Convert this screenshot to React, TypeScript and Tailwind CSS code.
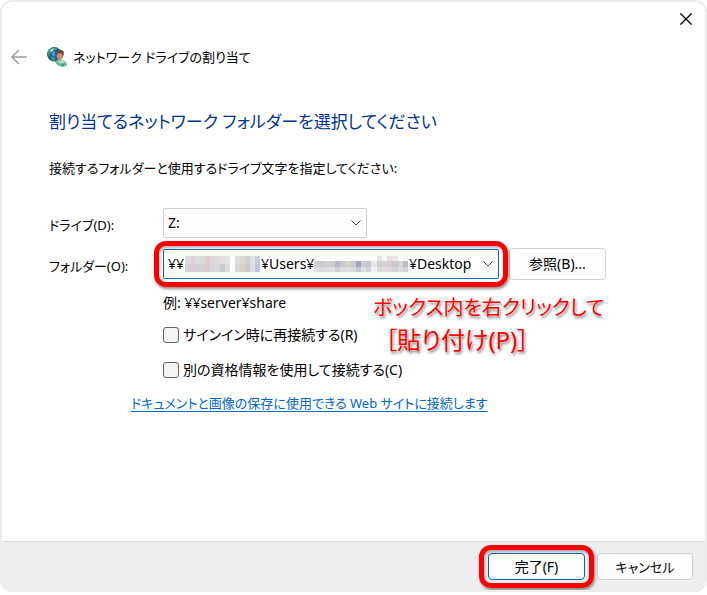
import React, { useState } from 'react';

// Small globe with a user in front, used as the wizard's icon
const NetworkDriveIcon: React.FC<React.SVGProps<SVGSVGElement>> = (props) => (
  <svg xmlns="http://www.w3.org/2000/svg" viewBox="0 0 20 20" fill="none" {...props}>
    <circle cx="7.300" cy="7.300" r="7.200" fill="#1a5aa8" />
    <path d="M.6 5.500C1.500 2.500 4.500.3 8 .3l3 .8-2 2L6.500 3 5 5.500 3.500 6 2.500 9 .5 8.500z" fill="#3c9a62" />
    <path d="M2.500 4C3.500 2 5.500 1.200 7.500 1.500L6 3.500 4.500 5z" fill="#9fe0e6" />
    <path d="M5 5l3-1.500V9L5 8.500z" fill="#35a5e8" />
    <path d="M4 9.500l3 .5 1.500 2.500-2 1.500-2-2z" fill="#3fa65a" />
    <path d="M7.800 14.500l3.200-2 4.500.8c3 .8 4.500 2.500 4.500 5-2 1.500-4.500 1.800-6.500 1.300-2.500-1-4.500-2.600-5.700-5.100z" fill="#6fb596" />
    <path d="M10.500 13.500l2.500 3 3 .5 1.500-1.500-2-2z" fill="#b9dfcc" />
    <path d="M14 17l2-1 1 2.500-1.500.8z" fill="#3f8f72" />
    <path d="M9.500 5.500c1-1.500 5-1.500 6 0 .8 2.500.5 5-.6 6.800l-2 1.700c-2-.5-3.500-3-3.400-8.500z" fill="#c98f6d" />
    <path d="M8.700 7.500C8 4.500 9.800 2.800 12.500 2.800c3 0 5 1.500 4.300 4.700l-1.200 3-.6-4-4-.3-1.300 2.300z" fill="#6a4a3a" />
  </svg>
);

const BackIcon: React.FC<React.SVGProps<SVGSVGElement>> = (props) => (
  <svg xmlns="http://www.w3.org/2000/svg" viewBox="0 0 16 16" fill="none" stroke="currentColor" strokeWidth={1.4} {...props}>
    <path strokeLinecap="round" strokeLinejoin="round" d="M15.300 8H.8M7.500 1.500L.8 8l6.700 6.500" />
  </svg>
);

const CloseIcon: React.FC<React.SVGProps<SVGSVGElement>> = (props) => (
  <svg xmlns="http://www.w3.org/2000/svg" viewBox="0 0 12 12" fill="none" stroke="currentColor" strokeWidth={1.3} {...props}>
    <path d="M.4.4l11.200 11.200M11.600.4L.4 11.600" />
  </svg>
);

const ChevronIcon: React.FC<React.SVGProps<SVGSVGElement>> = (props) => (
  <svg xmlns="http://www.w3.org/2000/svg" viewBox="0 0 10 6" fill="none" stroke="currentColor" strokeWidth={1} {...props}>
    <path d="M.5.5L5 5 9.500.5" />
  </svg>
);

// Red frame drawn around the control that the reader should use
const Highlight: React.FC = () => (
  <span className="pointer-events-none absolute -inset-x-[9px] -inset-y-2 rounded-xl border-5 border-[#fa0000] shadow-[1px_2px_3px_rgba(0,0,0,0.45),inset_1px_2px_3px_rgba(0,0,0,0.3)]" />
);

const HOST_TILES = [
  ['#dcdcdf', '#d8d6da', '#dddbe0', '#dcd8da', '#e2cdcf', '#d9d9dc', '#dcdce0', '#e0e0e0', '#e3e3e3', '#ffffff', '#dedee0', '#dfd6cd', '#cfd0d4', '#e2e2e4', '#c6cedd'],
  ['#d4d2d8', '#d5cdd3', '#cfcdd6', '#d8ced3', '#dcc9cc', '#d6d6de', '#d8d8dc', '#c5c8cd', '#dcdcdc', '#ffffff', '#d6d6d9', '#ddcdc0', '#c8cacf', '#dcdee2', '#bcc6da'],
];
const USER_TILES = [
  ['#f8f8f8', '#ffffff', '#ffffff', '#ffffff', '#ffffff', '#ffffff', '#ffffff', '#ffffff', '#ffffff', '#ffffff', '#ffffff', '#ffffff', '#e2e2e2', '#f5f5f5', '#eddcdf', '#e8e8e8', '#ffffff', '#f4f4f4'],
  ['#cfcfd1', '#cacace', '#d0d0d0', '#cdcdd0', '#b9bccb', '#c9c9d0', '#d3d2c4', '#c8cad0', '#9fa4c0', '#cbccd2', '#c4c7d3', '#e6e6e6', '#cfcfcf', '#d6d2d4', '#dfcbd0', '#c8cacf', '#d4d6db', '#b5c0c9'],
  ['#dedee0', '#dadada', '#dcdce2', '#e0dfdb', '#cdd0da', '#dadada', '#dedfe6', '#dbdbdb', '#c3c8da', '#dcdcdc', '#cdd1de', '#efefef', '#d9d9d9', '#dedede', '#dcd8de', '#d4d4d8', '#dcdce2', '#cfd3d8'],
];

// Mosaic hiding a private part of the path
const Mosaic: React.FC<{ rows: string[][]; className: string }> = ({ rows, className }) => (
  <span className={`pointer-events-none absolute flex h-4 flex-col ${className}`}>
    {rows.map((tiles, y) => (
      <span key={y} className="flex flex-1">
        {tiles.map((color, x) => (
          <span key={x} className="flex-1" style={{ backgroundColor: color }} />
        ))}
      </span>
    ))}
  </span>
);

export default function App() {
  const [drive, setDrive] = useState('Z:');
  const [folder, setFolder] = useState(
    '¥¥' + '\u2003'.repeat(5) + '\u2002¥Users¥' + '\u2003'.repeat(6) + '\u2002\u00a0¥Desktop',
  );
  const [reconnect, setReconnect] = useState(false);
  const [otherCredentials, setOtherCredentials] = useState(false);

  return (
    <div className="min-h-screen bg-white text-[14px] leading-5 text-black font-['Noto_Sans','Noto_Sans_CJK_JP',sans-serif] [font-feature-settings:'palt']">
      <main className="flex min-h-[592px] flex-col overflow-hidden rounded-xl border-2 border-[#ececec] bg-white">
        <div className="flex justify-end pt-2.5 pr-3">
          <button type="button" aria-label="閉じる" className="p-px">
            <CloseIcon className="h-3 w-3" />
          </button>
        </div>

        <header className="mt-[21px] flex items-center pl-[9px]">
          <button type="button" aria-label="戻る" className="text-[#9b9b9b]">
            <BackIcon className="h-4 w-4" />
          </button>
          <NetworkDriveIcon className="ml-5 h-5 w-5" />
          <span className="ml-1.5 text-[13px]">ネットワーク ドライブの割り当て</span>
        </header>

        <form className="flex flex-1 flex-col" onSubmit={(e) => e.preventDefault()}>
          <section className="flex-1 pl-[47px]">
            <h1 className="mt-[41px] text-[17px] leading-7 text-[#003399]">割り当てるネットワーク フォルダーを選択してください</h1>
            <p className="mt-[22px] text-[13px]">接続するフォルダーと使用するドライブ文字を指定してください:</p>

            <div className="mt-[30px] grid grid-cols-[114px_auto] items-center gap-y-2.5">
              <label htmlFor="drive" className="pt-1 text-[13px]">ドライブ(D):</label>
              <div className="relative w-[204px]">
                <select
                  id="drive"
                  value={drive}
                  onChange={(e) => setDrive(e.target.value)}
                  className="block h-[30px] w-full appearance-none rounded-xs border border-[#cfcfcf] bg-[#fdfdfd] px-1"
                >
                  <option>Z:</option>
                  <option>Y:</option>
                </select>
                <ChevronIcon className="pointer-events-none absolute top-3 right-1.5 h-1.5 w-2.5 text-[#444]" />
              </div>

              <label htmlFor="folder" className="pt-1 text-[13px]">フォルダー(O):</label>
              <div className="flex items-center gap-2.5">
                <div className="relative w-[336px]">
                  <input
                    id="folder"
                    value={folder}
                    onChange={(e) => setFolder(e.target.value)}
                    className="block h-[30px] w-full rounded-xs border border-[#0067c0] bg-white pr-5 pb-0.5 pl-1 outline-none"
                  />
                  <Mosaic rows={HOST_TILES} className="top-[7px] left-[22px] w-[75px]" />
                  <Mosaic rows={USER_TILES} className="top-[7px] left-[151px] w-[94px]" />
                  <ChevronIcon className="pointer-events-none absolute top-3 right-1.5 h-1.5 w-2.5 text-[#444]" />
                  <Highlight />
                </div>
                <button type="button" className="h-8 w-[97px] rounded-sm border border-[#d0d0d0] bg-[#fdfdfd]">
                  参照(B)...
                </button>
              </div>
            </div>

            <div className="relative pt-[13px] pl-[114px]">
              <p>例: ¥¥server¥share</p>
              <label className="mt-3 flex w-max items-center gap-1">
                <input
                  type="checkbox"
                  checked={reconnect}
                  onChange={(e) => setReconnect(e.target.checked)}
                  className="h-4 w-4 appearance-none rounded-[3px] border border-[#626262] bg-[#f3f3f3] checked:bg-[#0067c0]"
                />
                サインイン時に再接続する(R)
              </label>
              <label className="mt-[15px] flex w-max items-center gap-1">
                <input
                  type="checkbox"
                  checked={otherCredentials}
                  onChange={(e) => setOtherCredentials(e.target.checked)}
                  className="h-4 w-4 appearance-none rounded-[3px] border border-[#626262] bg-[#f3f3f3] checked:bg-[#0067c0]"
                />
                別の資格情報を使用して接続する(C)
              </label>

              {/* Instruction written over the dialog */}
              <p className="pointer-events-none absolute top-3 left-[324px] w-max text-[20px] leading-8 text-[#fa0000] [text-shadow:0_0_2px_#fff,1px_2px_3px_rgba(0,0,0,0.6)]">
                ボックス内を右クリックして
                <span className="block pl-3 text-[24px]">［貼り付け(P)］</span>
              </p>
            </div>

            <a href="#" className="mt-[13px] ml-[82px] inline-block text-[13px] text-[#0066cc] underline underline-offset-3">
              ドキュメントと画像の保存に使用できる Web サイトに接続します
            </a>
          </section>

          <footer className="flex items-center justify-end gap-3 border-t border-[#dcdcdc] bg-[#eeeeee] pt-[11px] pr-3 pb-2.5">
            <div className="relative">
              <button type="submit" className="block h-[27px] w-[97px] rounded-sm border border-[#0067c0] bg-[#fdfdfd]">
                完了(F)
              </button>
              <Highlight />
            </div>
            <button type="button" className="h-[27px] w-[96px] rounded-sm border border-[#d0d0d0] bg-[#fdfdfd] text-[13px]">
              キャンセル
            </button>
          </footer>
        </form>
      </main>
    </div>
  );
}
